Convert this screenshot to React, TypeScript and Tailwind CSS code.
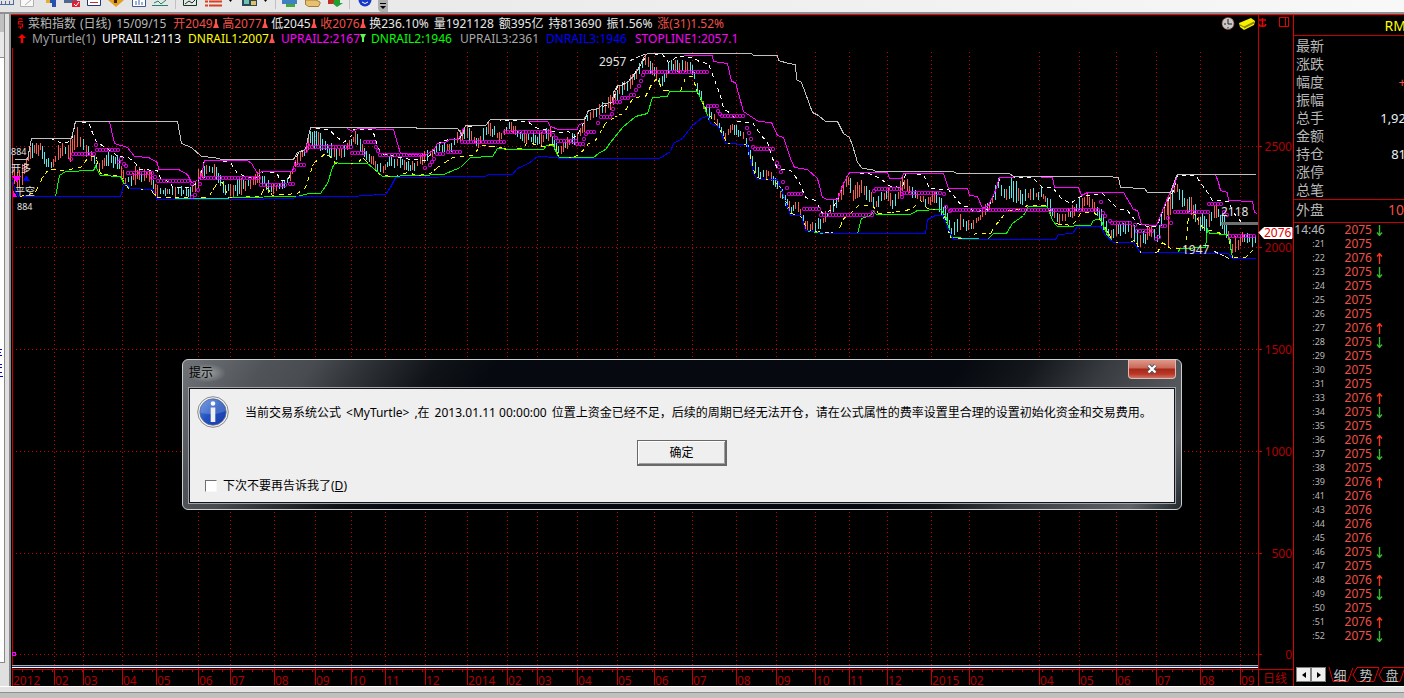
import React from "react";

type Pt = [number, number];

const months: [number, string][] = [
  [12, "2012"], [54, "02"], [83, "03"], [122, "04"], [156, "05"], [198, "06"], [230, "07"], [274, "08"],
  [315, "09"], [351, "10"], [385, "11"], [425, "12"], [467, "2014"], [507, "02"], [537, "03"], [577, "04"],
  [617, "05"], [654, "06"], [692, "07"], [736, "08"], [776, "09"], [815, "10"], [849, "11"], [887, "12"],
  [931, "2015"], [969, "02"], [1039, "04"], [1079, "05"], [1116, "06"], [1156, "07"], [1200, "08"], [1240, "09"],
];

const levels: [number, string][] = [
  [146, "2500"], [247, "2000"], [349, "1500"], [451, "1000"], [553, "500"], [654, "0"],
];

const upRail3 =
  "14,159 27,159 31,138 71,138 75,121 177,121 181,143 191,147 201,156 213,157 222,159 293,159 297,152 305,149 310,127 415,127 417,128 457,128 462,135 465,125 485,125 490,119 584,119 588,110 598,108 603,103 612,102 613,92 617,85 622,85 628,81 635,73 640,65 643,57 647,53 751,53 753,55 777,55 778,60 788,63 795,64 796,79 801,82 812,112 818,115 825,121 837,121 843,133 849,137 852,145 855,155 857,162 862,168 871,169 876,171 953,171 956,173 1009,173 1013,176 1106,176 1118,177 1120,187 1144,188 1147,192 1170,192 1175,178 1177,174 1255,174";
const upRail2a =
  "109,121 114,143 127,147 134,156 148,157 157,162 158,169 178,169 187,174 191,182 197,180 201,175 204,160 247,160 251,163 257,173 262,171 292,171 295,160";
const upRail2b =
  "347,128 352,131 357,128 393,129 397,143 400,153 424,155 433,150 437,143 445,142 449,139 458,139 463,128";
const upRail2c = "527,121 547,121 550,126 558,129 577,129 578,125 583,122";
const upRail2d =
  "683,55 712,55 713,61 727,63 731,81 735,82 743,111 758,121 771,122 777,135 783,137 790,158 794,167 807,169 817,178 822,197 827,199 837,199 843,183 849,172 887,172 889,178 901,178 903,173 943,173 948,188 967,188 969,195 977,196 982,208 988,205 995,190 999,177 1013,177";
const upRail2e =
  "1040,177 1052,177 1054,187 1078,187 1081,195 1087,192 1123,192 1133,209 1137,210 1141,224 1156,225 1162,210 1168,195 1173,187 1176,178";
const upRail2f = "1215,174 1218,182 1220,190 1227,192 1228,200 1252,201 1254,212 1257,213";
const upRail1 =
  "27,159 31,138 50,138 60,142 67,142 72,137 75,121 88,122 95,140 103,146 113,152 117,156 128,157 135,163 139,169 157,170 160,178 170,182 172,187 190,187 197,182 200,175 204,160 220,160 230,162 237,173 248,177 257,177 263,171 276,172 280,180 287,180 293,168 297,154 305,149 310,127 328,129 343,142 350,137 353,129 372,129 376,142 380,153 400,157 410,159 425,160 433,150 437,143 448,139 459,139 465,126 485,125 490,119 527,121 537,128 553,131 562,132 568,131 573,137 578,133 583,122 588,110 598,108 612,102 617,86 628,81 640,65 647,53 662,54 668,62 677,56 693,57 700,62 708,63 715,82 720,95 723,108 730,113 737,121 752,122 760,134 767,142 772,158 777,168 790,170 798,180 805,197 815,200 822,213 830,210 837,200 843,183 849,172 868,173 880,178 890,186 902,187 905,173 923,174 929,188 948,189 961,205 970,207 973,212 987,209 995,190 1000,177 1032,177 1042,187 1052,187 1060,197 1070,203 1080,196 1102,193 1117,208 1127,210 1137,223 1150,227 1157,225 1163,208 1173,190 1177,175 1195,175 1207,192 1212,200 1228,201 1233,212 1242,223 1252,224";
const dnRail1 =
  "20,196 35,192 42,177 48,169 63,170 80,167 87,158 95,155 100,173 120,176 123,180 128,188 150,189 157,197 187,197 193,198 208,197 217,182 222,182 228,197 260,196 265,185 272,195 297,193 305,187 313,163 325,153 332,158 335,163 357,163 362,157 368,163 380,175 395,176 407,172 417,175 430,173 437,167 452,157 473,155 480,145 495,146 507,149 522,148 527,142 543,146 555,143 558,157 573,157 580,153 588,143 595,140 605,123 617,115 623,113 633,97 645,96 652,82 657,78 662,90 680,91 685,77 692,76 697,92 707,112 718,127 727,143 747,144 755,177 773,180 780,187 790,213 800,215 807,230 837,233 843,218 847,216 858,205 872,205 878,213 902,211 912,208 920,200 927,208 942,210 950,237 970,239 975,233 990,233 995,225 1003,215 1008,210 1020,209 1027,205 1047,205 1053,223 1072,225 1080,213 1093,211 1102,222 1113,242 1130,242 1135,239 1140,252 1157,252 1162,242 1170,248 1185,248 1188,215 1193,212 1202,227 1210,230 1228,235 1232,257 1245,257 1252,250";
const dnRail2 =
  "55,196 59,175 65,171 93,170 95,166 100,175 120,176 124,184 130,188 152,189 157,199 192,198 227,198 230,197 297,196 308,193 320,193 327,183 332,167 335,162 340,163 367,163 378,172 382,176 417,175 443,174 460,167 470,157 492,156 497,148 510,149 543,149 546,145 553,145 558,157 593,157 598,153 605,149 610,142 622,127 635,116 647,113 652,97 667,96 669,91 697,91 702,102 710,123 718,126 725,143 747,144 753,173 757,179 777,179 790,215 801,215 805,230 823,233 857,233 861,218 870,215 873,211 876,214 910,214 917,210 940,209 945,215 951,237 987,239 993,233 1006,233 1012,223 1023,215 1028,206 1047,206 1052,220 1057,226 1090,225 1093,220 1100,218 1107,235 1113,242 1133,242 1140,252 1177,252 1180,248 1205,247 1207,228 1209,233 1228,234 1232,257";
const dnRail3 =
  "12,180 15,190 18,196 120,196 123,185 126,183 130,188 152,189 157,199 262,199 264,198 292,198 297,196 347,196 370,195 375,194 385,194 390,187 395,177 485,176 488,174 512,174 517,168 528,163 537,156 557,157 559,158 659,158 670,151 673,143 682,138 692,125 702,117 708,116 710,123 718,126 725,143 747,144 753,173 757,179 777,179 782,192 790,215 801,215 805,230 822,232 823,233 925,233 927,219 935,215 943,215 947,227 953,239 1055,239 1058,234 1072,233 1077,226 1100,226 1105,235 1113,242 1133,242 1140,252 1228,253 1232,258 1255,258";

const stopRuns: [number, number, number][] = [
  [71, 71, 159], [73, 95, 154], [96, 96, 145], [97, 118, 150], [119, 119, 162], [121, 121, 159], [124, 124, 164],
  [126, 126, 166], [128, 152, 173], [152, 152, 178], [155, 155, 177], [158, 190, 181], [192, 192, 184],
  [192, 192, 197], [195, 195, 195], [198, 198, 190], [200, 200, 184], [202, 260, 178], [261, 287, 185],
  [290, 293, 184], [294, 296, 170], [298, 304, 165], [306, 306, 151], [308, 308, 145], [309, 351, 147],
  [352, 364, 153], [365, 375, 142], [376, 376, 147], [378, 378, 151], [380, 423, 155], [425, 427, 168],
  [430, 430, 165], [432, 432, 162], [434, 434, 159], [437, 445, 154], [448, 461, 152], [462, 504, 142],
  [505, 552, 132], [553, 553, 135], [556, 556, 138], [558, 576, 141], [577, 583, 144], [584, 584, 139],
  [586, 586, 134], [588, 596, 132], [598, 598, 123], [601, 611, 117], [612, 612, 114], [613, 613, 109],
  [614, 620, 102], [622, 630, 98], [631, 634, 95], [636, 636, 90], [639, 639, 86], [641, 641, 81], [643, 643, 75],
  [644, 707, 72], [708, 717, 106], [718, 718, 111], [720, 720, 114], [722, 745, 116], [747, 747, 128],
  [749, 749, 133], [751, 751, 139], [753, 753, 147], [755, 774, 149], [777, 777, 163], [779, 779, 167],
  [781, 781, 172], [783, 785, 182], [787, 787, 188], [789, 802, 194], [804, 820, 209], [821, 872, 215],
  [873, 873, 212], [874, 874, 191], [876, 901, 189], [902, 902, 197], [902, 902, 194], [904, 942, 193],
  [944, 944, 194], [946, 948, 207], [950, 950, 211], [951, 1100, 210], [1101, 1101, 202], [1103, 1103, 213],
  [1105, 1107, 216], [1110, 1110, 221], [1112, 1132, 223], [1135, 1135, 225], [1137, 1154, 231],
  [1156, 1156, 239], [1159, 1159, 237], [1162, 1166, 226], [1168, 1168, 218], [1171, 1173, 223],
  [1175, 1208, 212], [1209, 1222, 204], [1224, 1224, 212], [1227, 1227, 215], [1230, 1256, 236],
];

/* x, high, low of the trading range */
const band: [number, number, number][] = [
  [12, 155, 185], [16, 165, 195], [24, 152, 182], [30, 140, 162], [40, 138, 155], [45, 152, 170], [52, 158, 170],
  [60, 140, 160], [70, 138, 162], [75, 122, 150], [85, 142, 157], [92, 150, 162], [97, 160, 176], [105, 150, 168],
  [118, 152, 170], [125, 175, 187], [135, 165, 186], [150, 168, 182], [155, 182, 197], [165, 187, 197],
  [175, 185, 197], [190, 185, 198], [200, 165, 187], [207, 160, 172], [217, 166, 182], [225, 178, 198],
  [240, 178, 196], [250, 175, 190], [260, 168, 182], [270, 183, 197], [280, 178, 193], [290, 172, 182],
  [297, 152, 167], [305, 145, 157], [310, 128, 147], [320, 132, 152], [330, 142, 160], [340, 145, 162],
  [355, 130, 145], [365, 147, 162], [380, 163, 176], [390, 155, 168], [405, 156, 171], [410, 163, 174],
  [420, 153, 167], [437, 143, 156], [450, 139, 153], [462, 127, 142], [467, 125, 140], [478, 136, 149],
  [488, 120, 135], [500, 130, 143], [508, 119, 132], [520, 129, 142], [540, 133, 148], [550, 125, 140],
  [557, 145, 158], [565, 138, 151], [575, 130, 146], [582, 120, 137], [588, 109, 123], [600, 102, 116],
  [612, 94, 110], [620, 82, 96], [630, 75, 92], [640, 59, 76], [645, 53, 68], [652, 60, 76], [660, 74, 90],
  [670, 57, 74], [685, 58, 74], [692, 62, 77], [697, 80, 93], [705, 100, 116], [715, 112, 126], [725, 129, 143],
  [732, 119, 133], [745, 134, 144], [752, 148, 172], [760, 170, 180], [770, 168, 179], [780, 185, 200],
  [790, 203, 216], [797, 199, 211], [806, 220, 232], [820, 217, 233], [830, 203, 216], [838, 190, 206],
  [848, 172, 187], [853, 184, 206], [862, 178, 197], [875, 198, 211], [887, 184, 201], [893, 198, 211],
  [903, 173, 191], [915, 188, 202], [925, 193, 208], [935, 188, 206], [945, 203, 226], [951, 223, 239],
  [960, 213, 232], [970, 220, 234], [980, 211, 223], [990, 196, 213], [998, 177, 193], [1006, 184, 203],
  [1012, 175, 202], [1022, 188, 206], [1030, 187, 202], [1042, 187, 201], [1050, 198, 216], [1058, 213, 226],
  [1070, 206, 221], [1080, 196, 213], [1087, 193, 206], [1100, 203, 226], [1110, 228, 243], [1120, 220, 237],
  [1130, 218, 237], [1140, 233, 252], [1150, 223, 239], [1157, 230, 247], [1165, 198, 217], [1170, 188, 222],
  [1175, 175, 196], [1185, 191, 212], [1192, 197, 217], [1200, 213, 232], [1208, 213, 237], [1215, 200, 216],
  [1225, 218, 237], [1232, 238, 257], [1242, 231, 247], [1255, 232, 247],
];

const UP = "#f85c50";
const DOWN = "#58e8e8";

function buildBars() {
  const bars: { x: number; top: number; bottom: number; up: boolean }[] = [];
  let seed = 7;
  const rand = () => {
    seed = (seed * 16807) % 2147483647;
    return seed / 2147483647;
  };
  let k = 0;
  for (let x = 12; x <= 1255; x += rand() > 0.65 ? 3 : 2) {
    while (k < band.length - 2 && band[k + 1][0] < x) k++;
    const a = band[k];
    const b = band[k + 1];
    const t = (x - a[0]) / (b[0] - a[0]);
    const hi = a[1] + (b[1] - a[1]) * t;
    const lo = a[2] + (b[2] - a[2]) * t;
    const span = lo - hi;
    const top = Math.round(hi + rand() * span * 0.4);
    const bottom = Math.round(lo - rand() * span * 0.35);
    const rising = b[1] < a[1];
    bars.push({ x, top, bottom: Math.max(bottom, top + 3), up: rand() < (rising ? 0.7 : 0.35) });
  }
  return bars;
}

const bars = buildBars();
const stopDots: Pt[] = stopRuns.flatMap(([a, b, y]) => {
  const out: Pt[] = [];
  for (let x = a; x <= b; x += 3) out.push([x, y]);
  return out;
});
const minorTicks = Array.from({ length: 124 }, (_, i) => 22 + i * 10);

const cjk = "font-['Noto_Sans','Noto_Sans_CJK_SC',sans-serif]";

function Rail({ points, color, dash }: { points: string; color: string; dash?: string }) {
  return (
    <polyline points={points} transform="translate(0.5 0.5)" fill="none" stroke={color} strokeWidth="1" strokeDasharray={dash} />
  );
}

function Plot() {
  return (
    <svg viewBox="11 48 1282 638" className="block min-h-0 w-full flex-1 overflow-visible text-[12px]" preserveAspectRatio="xMinYMin meet" shapeRendering="crispEdges">
      <g stroke="#c80000" strokeDasharray="1 3">
        {months.map(([x], i) => (
          <line key={i} x1={x + 0.5} x2={x + 0.5} y1="52" y2="669" />
        ))}
        {levels.map(([y]) => (
          <line key={y} x1="12" x2="1258" y1={y + 0.5} y2={y + 0.5} />
        ))}
      </g>
      <g fill="#c80000">
        <rect x="12" y="48" width="1" height="638" />
        <rect x="1258" y="48" width="1" height="638" />
        <rect x="12" y="669" width="1281" height="1" />
        {months.map(([x], i) => (
          <rect key={i} x={x} y="669" width="1" height="16" />
        ))}
        {minorTicks.map((x) => (
          <rect key={x} x={x} y="669" width="1" height="3" />
        ))}
        {levels.map(([y]) => (
          <rect key={y} x="1258" y={y} width="4" height="1" />
        ))}
      </g>
      <rect x="12" y="665" width="1246" height="1" fill="#a8a8a8" />
      <rect x="12" y="666" width="1246" height="1" fill="#102880" />
      <rect x="12" y="667" width="1246" height="1" fill="#ffffff" />
      <g fill="#b00000">
        {months.map(([x, label], i) => (
          <text key={i} x={x + 1} y="685" fontSize="12">{label}</text>
        ))}
        {levels.map(([y, label]) => (
          <text key={y} x="1292" y={y + 5} textAnchor="end" fontSize="12">{label}</text>
        ))}
        <text x="1263" y="683" fontSize="12">日线</text>
      </g>

      {bars.map((b) => (
        <rect key={b.x} x={b.x} y={b.top} width="1" height={b.bottom - b.top} fill={b.up ? UP : DOWN} />
      ))}
      <rect x="1168" y="195" width="1" height="52" fill={UP} />

      <Rail points={upRail1} color="#ffffff" dash="4 4" />
      <Rail points={dnRail1} color="#ffff00" dash="4 5" />
      <Rail points={dnRail2} color="#00ff00" />
      <Rail points={dnRail3} color="#0000ff" />
      <Rail points={dnRail1} color="#ffff00" dash="2 14" />
      {[upRail2a, upRail2b, upRail2c, upRail2d, upRail2e, upRail2f].map((p) => (
        <Rail key={p} points={p} color="#ff00ff" />
      ))}
      <Rail points={upRail3} color="#c0c0c0" />
      <g fill="none" stroke="#ff00ff" strokeWidth="1" shapeRendering="auto">
        {stopDots.map(([x, y], i) => (
          <rect key={i} x={x - 1.5} y={y - 1.5} width="3" height="3" rx="0.8" />
        ))}
        <rect x="12.5" y="652.5" width="3" height="3" />
      </g>
      <rect x="1221" y="222" width="37" height="3" fill="#707070" />

      <path d="M12 176h9l-4 7zM13 190l4 7l-4 0z" fill="#ff00ff" />
      <path d="M26 175l4 6h-7z" fill="#0000ff" />
      <g fill="#e0e0e0" fontSize="9">
        <text x="11" y="155">884</text>
        <text x="17" y="210">884</text>
        <text x="11" y="172" fontSize="10">开多</text>
        <text x="15" y="195" fontSize="10">平空</text>
      </g>
      <g fill="#e0e0e0" fontSize="12">
        <text x="599" y="66">2957</text>
        <text x="1221" y="216">2118</text>
        <text x="1182" y="254">1947</text>
      </g>
      <path d="M630.5 60.5L646 53.5M1214.5 251.5L1229 258.5" stroke="#e0e0e0" strokeDasharray="4 2" />
      <path d="M1259 232.500L1264 227.500H1292V238.500H1264Z" fill="#ffffff" stroke="#ffffff" shapeRendering="auto" />
      <text x="1264" y="237" fill="#e00000" fontSize="12">2076</text>
    </svg>
  );
}

function Marker({ down = false }: { down?: boolean }) {
  return down ? (
    <svg width="6" height="9" viewBox="0 0 6 9" aria-hidden="true"><path d="M0 0h6L4 4v4H2V4z" fill="#58f858" /></svg>
  ) : (
    <svg width="6" height="9" viewBox="0 0 6 9" aria-hidden="true"><path d="M2 0h2v4l2 5H0l2-5z" fill="#ff5050" /></svg>
  );
}

const ohlc: [string, string][] = [
  ["开2049", "text-[#f05048]"],
  ["高2077", "text-[#f05048]"],
  ["低2045", "text-[#e8e8e8]"],
  ["收2076", "text-[#f05048]"],
];
const stats = ["换236.10%", "量1921128", "额395亿", "持813690", "振1.56%"];

function ChartHeader() {
  return (
    <header className="flex h-[33px] shrink-0 pl-[6px]">
      <div className="min-w-0 flex-1 overflow-hidden whitespace-nowrap pt-px text-[12px] leading-[15px]">
        <div className="flex items-center text-[#e8e8e8]">
          <svg width="7" height="11" viewBox="0 0 7 11" className="mr-[4px]" aria-hidden="true">
            <path d="M1.500 1.500L3.500 0L5.500 1.500M6 3.500H1.500v2.500h4v3H1M3.500 9v2" stroke="#f00000" strokeWidth="1.200" fill="none" />
          </svg>
          <span className="text-[#b8b8b8]">菜粕指数</span>
          <span className="ml-[4px] text-[#b8b8b8]">(日线)</span>
          <span className="ml-[5px] w-[57px] text-[#b8b8b8]">15/09/15</span>
          {ohlc.map(([label, tone]) => (
            <span key={label} className={`flex w-[49px] items-center ${tone}`}>
              {label}
              <Marker />
            </span>
          ))}
          <span className="flex gap-[5px]">
            {stats.map((s) => (
              <span key={s}>{s}</span>
            ))}
            <span className="text-[#f05048]">涨(31)1.52%</span>
          </span>
        </div>
        <div className="flex items-center">
          <svg width="8" height="9" viewBox="0 0 8 9" className="ml-px mr-[6px]" aria-hidden="true">
            <path d="M4 0l4 4H5.200v5H2.800V4H0z" fill="#ff0000" />
          </svg>
          <span className="w-[70px] text-[#a0a0a0]">MyTurtle(1)</span>
          <span className="w-[86px] text-white">UPRAIL1:2113</span>
          <span className="flex w-[93px] items-center text-[#ffff00]">DNRAIL1:2007<Marker /></span>
          <span className="flex w-[90px] items-center text-[#ff00ff]">UPRAIL2:2167<Marker down /></span>
          <span className="w-[89px] text-[#00ff00]">DNRAIL2:1946</span>
          <span className="w-[86px] text-[#a8a8a8]">UPRAIL3:2361</span>
          <span className="w-[89px] text-[#0000ff]">DNRAIL3:1946</span>
          <span className="text-[#ff00ff]">STOPLINE1:2057.1</span>
        </div>
      </div>
      <svg width="37" height="33" viewBox="0 0 37 33" aria-hidden="true">
        <circle cx="7" cy="8.500" r="6" fill="#c8c8c8" stroke="#904040" strokeDasharray="2 1" />
        <path d="M7 4v5h4M3 9h2M7 12v1.500" stroke="#202020" fill="none" />
        <path d="M18 8l12-5l4 3l-1 4l-10 5l-4-3z" fill="#f8f000" />
        <path d="M19 10l4 2l10-5M23 13l10-5" stroke="#807800" fill="none" />
      </svg>
      <div className="w-[35px] border-l border-[#c80000]">
        <svg width="34" height="16" viewBox="0 0 34 16" aria-hidden="true">
          <path d="M0 5h7M3.500 3v9M0 9l1 2h5l1-2" stroke="#f00000" strokeWidth="1.500" fill="none" />
          <path d="M20.500 2.500h9v9h-9zM26.500 2.500v9" stroke="#e00000" fill="none" shapeRendering="crispEdges" />
        </svg>
      </div>
    </header>
  );
}

const quoteRows: [string, string, string][] = [
  ["最新", "", ""],
  ["涨跌", "", ""],
  ["幅度", "+", "text-[#f05048]"],
  ["振幅", "", ""],
  ["总手", "1,92", "text-[#e8f0f8]"],
  ["金额", "", ""],
  ["持仓", "81", "text-[#e8f0f8]"],
  ["涨停", "", ""],
  ["总笔", "", ""],
];

const trades: [string, number, string][] = [
  ["14:46", 2075, "d"], [":21", 2075, ""], [":22", 2076, "u"], [":23", 2075, "d"], [":24", 2075, ""],
  [":25", 2075, ""], [":26", 2075, ""], [":27", 2076, "u"], [":28", 2075, "d"], [":29", 2075, ""],
  [":30", 2075, ""], [":31", 2075, ""], [":33", 2076, "u"], [":34", 2075, "d"], [":35", 2075, ""],
  [":36", 2076, "u"], [":37", 2075, "d"], [":38", 2075, ""], [":39", 2076, "u"], [":41", 2076, ""],
  [":43", 2076, ""], [":44", 2076, ""], [":45", 2076, ""], [":46", 2075, "d"], [":47", 2075, ""],
  [":48", 2076, "u"], [":49", 2075, "d"], [":50", 2075, ""], [":51", 2076, "u"], [":52", 2075, "d"],
];

function QuotePanel() {
  return (
    <aside className="flex w-[111px] shrink-0 flex-col overflow-hidden border-l border-[#e00000] text-[14px]">
      <div className="flex h-[21px] shrink-0 items-center justify-end overflow-hidden border-b border-[#c80000] text-[#ffff00]">
        <span className="-mr-[2px]">RM</span>
      </div>
      <div className="flex shrink-0 flex-col border-b border-[#c80000] pl-[2px] pt-px leading-[18px]">
        {quoteRows.map(([label, value, tone]) => (
          <div key={label} className="flex h-[18px] justify-between text-[#b8b8b8]">
            <span>{label}</span>
            <span className={`-mr-[2px] text-[13px] ${tone}`}>{value}</span>
          </div>
        ))}
      </div>
      <div className="flex h-[23px] shrink-0 justify-between border-b border-[#c80000] pl-[2px] leading-[20px] text-[#b8b8b8]">
        <span>外盘</span>
        <span className="text-[#f05048]">10</span>
      </div>
      <table className="w-[93px] border-collapse text-[12px] leading-[14px]">
        <tbody>
          {trades.map(([time, price, dir], i) => (
            <tr key={i} className="h-[14px]">
              <td className={i === 0 ? "w-[31px] p-0 text-right text-[12px] leading-[14px] text-[#b8b8b8]" : "w-[31px] p-0 text-right text-[9px] leading-[14px] text-[#b8b8b8]"}>{time}</td>
              <td className="w-[47px] p-0 text-right leading-[14px] text-[#f05048]">{price}</td>
              <td className="p-0 pl-[4px]">
                {dir !== "" && (
                  <svg width="7" height="11" viewBox="0 0 7 11" className="block" aria-hidden="true">
                    {dir === "u" ? (
                      <path d="M3.500 11V1M1 3.500l2.500-3l2.500 3" stroke="#f83820" strokeWidth="1.400" fill="none" />
                    ) : (
                      <path d="M3.500 0v10M1 7.500l2.500 3l2.500-3" stroke="#38b830" strokeWidth="1.400" fill="none" />
                    )}
                  </svg>
                )}
              </td>
            </tr>
          ))}
        </tbody>
      </table>
      <nav className="mt-auto flex h-[19px] shrink-0 pb-[3px] pl-[2px] text-[13px] leading-[16px] text-[#c0c0c0]">
        <button aria-label="向左" className="flex h-[15px] w-[15px] shrink-0 items-center justify-center border border-[#808080] bg-[#f0f0f0]">
          <svg width="4" height="6" viewBox="0 0 4 6"><path d="M4 0v6L0 3z" fill="#000" /></svg>
        </button>
        <button aria-label="向右" className="flex h-[15px] w-[15px] shrink-0 items-center justify-center border border-[#808080] bg-[#f0f0f0]">
          <svg width="4" height="6" viewBox="0 0 4 6"><path d="M0 0v6l4-3z" fill="#000" /></svg>
        </button>
        {["细", "势", "盘"].map((t, i) => (
          <button key={t} className="relative h-[16px] w-[26px] shrink-0 text-center">
            <svg width="27" height="16" viewBox="0 0 27 16" className="absolute left-0 top-0" aria-hidden="true">
              <path d={i === 0 ? "M3 0l4 14.500h15l5-14" : "M27 0.500H5L1 8M1 8l4 6.500h17l5-14"} stroke="#e00000" fill="none" />
            </svg>
            <span className="relative pl-[2px]">{t}</span>
          </button>
        ))}
      </nav>
    </aside>
  );
}

function Toolbar() {
  return (
    <div className="h-[14px] shrink-0 border-b-2 border-[#909090] bg-gradient-to-r from-[#e4e4e4] to-[#f8f8f8]">
      <svg width="400" height="12" viewBox="0 0 400 12" aria-label="工具栏">
        <path d="M0 4.500h14M1.500 4V1M5.500 4V1M9.500 4V1M13.500 4V0" stroke="#5068a0" fill="none" />
        <path d="M20.500 0v6.500h13V0M25 5l6-5" stroke="#b0b0b0" fill="#f8f8f8" />
        <path d="M46 0h6v3h-6z" fill="#e0b030" /><path d="M50 0h6v7h-4V3h-2z" fill="#2850b0" />
        <path d="M64 0h13v3H64z" fill="#506890" /><path d="M72 1h8v6h-8z" fill="#e02030" /><path d="M74 4l2 2l3-4" stroke="#fff" fill="none" />
        <path d="M87.500 0v5.500h13V0" stroke="#203878" fill="#fff" /><path d="M90 2.500h8" stroke="#c03030" />
        <path d="M108 0h16l-8 7z" fill="#e0a020" /><path d="M114 0h3v3h-3z" fill="#402000" />
        <path d="M132.500 0v6.500h13V0" stroke="#405890" fill="#fff" /><path d="M136 5V1M139 5V0M142 5V2" stroke="#4060b0" />
        <path d="M152 5.500h16M154 3l4-2l3 3l5-4" stroke="#208068" fill="none" />
        <path d="M175.500 0v9M275.500 0v9M349.500 0v9" stroke="#c0c0c0" />
        <path d="M183.500 0v5.500h13V0M185 4l4-3l3 2l3-3" stroke="#103820" fill="none" />
        <path d="M205 1.500h3M209 1.500h13M205 5.500h3M209 5.500h13" stroke="#d84020" strokeWidth="2" />
        <path d="M229 0h3l-1.500 2zM264 0h3l-1.500 2z" fill="#000" />
        <path d="M242 0h15v6h-15z" fill="#284858" /><path d="M244 0h5v4h-5z" fill="#70c0b0" /><path d="M251 1h5v4h-5z" fill="#e0c060" />
        <path d="M282 0h15v4h-15z" fill="#4080c0" /><path d="M286 4h9v3h-9z" fill="#40a840" />
        <path d="M305.500 0v4.500l3 2h10l1.500-3V2l-4-2z" fill="#e8c070" stroke="#a08030" />
        <path d="M328 0h8v4h-8z" fill="#c03020" /><path d="M334 0h6v3h3l-6 4l-5-4h2z" fill="#20a030" />
        <circle cx="365" cy="0" r="6.500" fill="#1838c8" /><path d="M362 2q3 3 6 0" stroke="#fff" fill="none" />
        <path d="M378 0h10v12h-7q-3-1-3-4z" fill="#b0b0b0" /><path d="M380 3.500h6" stroke="#000" /><path d="M380 6h6l-3 3z" fill="#000" />
      </svg>
    </div>
  );
}

function InfoIcon() {
  return (
    <svg width="32" height="32" viewBox="0 0 32 32" aria-hidden="true">
      <defs>
        <linearGradient id="infoFill" x1="0" y1="0" x2="1" y2="1">
          <stop offset="0" stopColor="#5888e0" />
          <stop offset="0.500" stopColor="#2050c0" />
          <stop offset="1" stopColor="#1838a8" />
        </linearGradient>
      </defs>
      <circle cx="16" cy="16" r="15.300" fill="#f4f4f4" stroke="#888" />
      <circle cx="16" cy="16" r="13.200" fill="url(#infoFill)" stroke="#607090" strokeWidth="0.800" />
      <path d="M3.500 17a12.500 12.500 0 0 1 25-2q-10 5-25 2z" fill="#fff" opacity="0.180" />
      <circle cx="16" cy="7.500" r="2.300" fill="#fff" />
      <path d="M13.700 11.500h4.600v14.500h-4.600z" fill="#f0f0f0" />
    </svg>
  );
}

function Dialog() {
  return (
    <section
      role="dialog"
      aria-labelledby="dialog-title"
      className="absolute left-[182px] top-[359px] flex w-[1000px] flex-col rounded-[6px] border border-[#c8d0d0] bg-[#0a1018] bg-[linear-gradient(125deg,#707478_0,#505458_70px,#484c50_110px,#303438_150px,#101418_210px,#060a10_260px,#060a10_640px,#14181c_700px,#383c40_760px,#606468_860px,#0a1018_920px)] px-[5px] pb-[5px] text-[12px] text-black"
    >
      <div className="flex h-[27px] items-start justify-between">
        <h1 id="dialog-title" className="mt-[4px] rounded-full bg-[radial-gradient(ellipse,#a0a4a4_0%,#a0a4a400_75%)] pl-px pr-[12px] leading-[18px]">提示</h1>
        <button aria-label="关闭" className="flex h-[19px] w-[48px] items-center justify-center rounded-b-[4px] border border-t-0 border-[#e0b8b0] bg-[linear-gradient(#e09888_0,#c86858_8px,#a82818_9px,#b83828_14px,#d07060_100%)]">
          <svg width="12" height="10" viewBox="0 0 12 10"><path d="M2.500 1.500l7 7M9.500 1.500l-7 7" stroke="#505860" strokeWidth="4" /><path d="M2.500 1.500l7 7M9.500 1.500l-7 7" stroke="#fff" strokeWidth="2.200" /></svg>
        </button>
      </div>
      <div className="flex flex-col border border-[#a0a4a8] bg-[#efefef] p-[8px] outline outline-1 -outline-offset-2 outline-[#101418]">
        <div className="flex items-center gap-[16px]">
          <InfoIcon />
          <p className="flex gap-[5px] whitespace-nowrap pt-px leading-[18px]">
            <span>当前交易系统公式</span>
            <span>&lt;MyTurtle&gt;</span>
            <span>,在</span>
            <span>2013.01.11 00:00:00</span>
            <span>位置上资金已经不足，后续的周期已经无法开仓，请在公式属性的费率设置里合理的设置初始化资金和交易费用。</span>
          </p>
        </div>
        <button className="mt-[12px] h-[26px] w-[90px] self-center border border-b-2 border-r-2 border-[#686868] bg-[#efefef] leading-[22px] shadow-[inset_1px_1px_#fff,inset_-1px_-1px_#a0a0a0]">确定</button>
        <label className="mt-[10px] flex items-center gap-[6px] pl-[8px] leading-[18px]">
          <input type="checkbox" className="h-[12px] w-[12px] appearance-none border border-b-[#f8f8f8] border-l-[#707070] border-r-[#f8f8f8] border-t-[#707070] bg-white" />
          <span className="pt-px">下次不要再告诉我了(<u>D</u>)</span>
        </label>
      </div>
    </section>
  );
}

export default function App() {
  return (
    <div className={`relative flex h-screen flex-col overflow-hidden bg-[#c0c0c0] ${cjk}`}>
      <Toolbar />
      <main className="flex min-h-0 flex-1">
        <div className="flex w-[11px] shrink-0 border-r-2 border-[#888888] bg-[#e0e0e0]">
          <div className="mb-[23px] flex w-[5px] flex-col overflow-hidden border-b border-r border-[#888888] bg-white">
            <div className="h-[18px] bg-[#c0c0c0]" />
            <div className="h-[26px] border-b border-[#909090] bg-[#e8e8e8]" />
            <svg width="4" height="34" viewBox="0 0 4 34" className="mt-[290px]" aria-hidden="true">
              <path d="M0 1.500h2M0 4.500h1M0 7.500h2M0 16.500h2M0 19.500h2M0 24.500h2M0 28.500h3" stroke="#0000d0" />
            </svg>
          </div>
        </div>
        <div className="flex min-w-0 flex-1 border-t border-[#ff0000] bg-black">
          <div className="flex min-w-0 flex-1 flex-col">
            <ChartHeader />
            <Plot />
          </div>
          <QuotePanel />
        </div>
      </main>
      <footer className="h-[12px] shrink-0 border-t border-white bg-[#e4e4e4]">
        <div className="mt-[5px] h-[6px] border-t border-[#909090] bg-[#c0c0c0]" />
      </footer>
      <Dialog />
    </div>
  );
}
